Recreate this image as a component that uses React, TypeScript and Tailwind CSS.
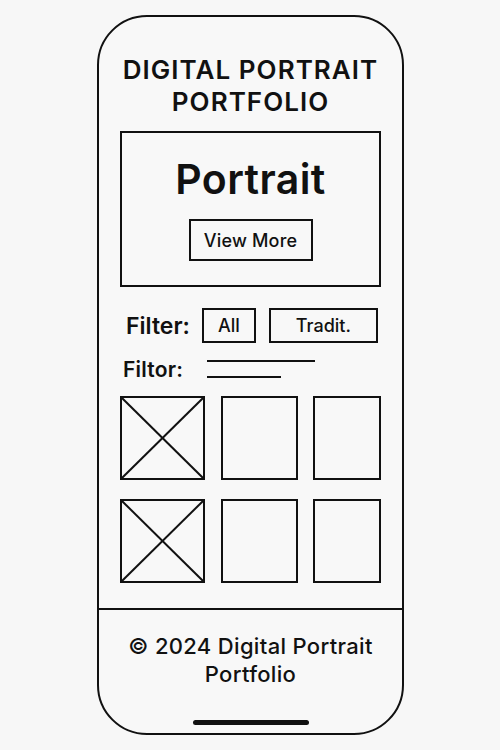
import React from "react";

const font = { fontFamily: "Inter, 'Noto Sans', sans-serif" };

function Thumb({ crossed }: { crossed?: boolean }) {
  return (
    <div className="h-[84px] border-2 border-[#111] bg-[#f8f8f8]">
      {crossed ? (
        <svg className="block w-full h-full" viewBox="0 0 100 100" preserveAspectRatio="none">
          <line x1="0" y1="0" x2="100" y2="100" stroke="#111" strokeWidth="2" vectorEffect="non-scaling-stroke" />
          <line x1="100" y1="0" x2="0" y2="100" stroke="#111" strokeWidth="2" vectorEffect="non-scaling-stroke" />
        </svg>
      ) : null}
    </div>
  );
}

export default function App() {
  return (
    <div className="w-[500px] h-[750px] bg-[#f7f7f7] pt-[15px] text-[#111]" style={font}>
      <div className="ml-[97px] w-[307px] h-[720px] rounded-[50px] border-2 border-[#111] overflow-hidden flex flex-col bg-[#f8f8f8]">
        <h1 className="pt-[37px] text-center text-[26px] leading-[32px] font-semibold tracking-[0.04em]">
          DIGITAL PORTRAIT
          <br />
          PORTFOLIO
        </h1>

        <div className="mx-[21px] mt-[13px] h-[156px] border-2 border-[#111] flex flex-col items-center pt-[21px]">
          <div className="text-[41px] leading-[50px] font-semibold tracking-[0.01em]">Portrait</div>
          <button className="mt-[15px] w-[124px] h-[42px] border-2 border-[#111] text-[18px] font-medium tracking-[0.01em]">
            View More
          </button>
        </div>

        <div className="mx-[21px] mt-[21px] flex items-center">
          <span className="ml-[6px] text-[23px] leading-[28px] font-semibold">Filter:</span>
          <button className="ml-[12px] w-[54px] h-[35px] border-2 border-[#111] text-[18px] font-medium">All</button>
          <button className="ml-[13px] w-[109px] h-[35px] border-2 border-[#111] text-[18px] font-medium">Tradit.</button>
        </div>

        <div className="mx-[21px] mt-[15px] flex items-start">
          <span className="ml-[3px] text-[21px] leading-[24px] font-semibold tracking-[0.01em]">Filtor:</span>
          <div className="ml-[24px] mt-[2px] flex flex-col gap-[14px]">
            <div className="w-[108px] h-[2px] bg-[#111]" />
            <div className="w-[74px] h-[2px] bg-[#111]" />
          </div>
        </div>

        <div className="mx-[21px] mt-[14px] grid grid-cols-[85px_77px_68px] gap-x-[15.5px] gap-y-[19px]">
          <Thumb crossed />
          <Thumb />
          <Thumb />
          <Thumb crossed />
          <Thumb />
          <Thumb />
        </div>

        <footer className="mt-auto border-t-2 border-[#111] pt-[22px] pb-[8px] flex flex-col items-center">
          <p className="text-center text-[22px] leading-[28px] font-medium tracking-[0.015em]">
            © 2024 Digital Portrait
            <br />
            Portfolio
          </p>
          <div className="mt-[32px] w-[116px] h-[5px] rounded-full bg-[#111]" />
        </footer>
      </div>
    </div>
  );
}
